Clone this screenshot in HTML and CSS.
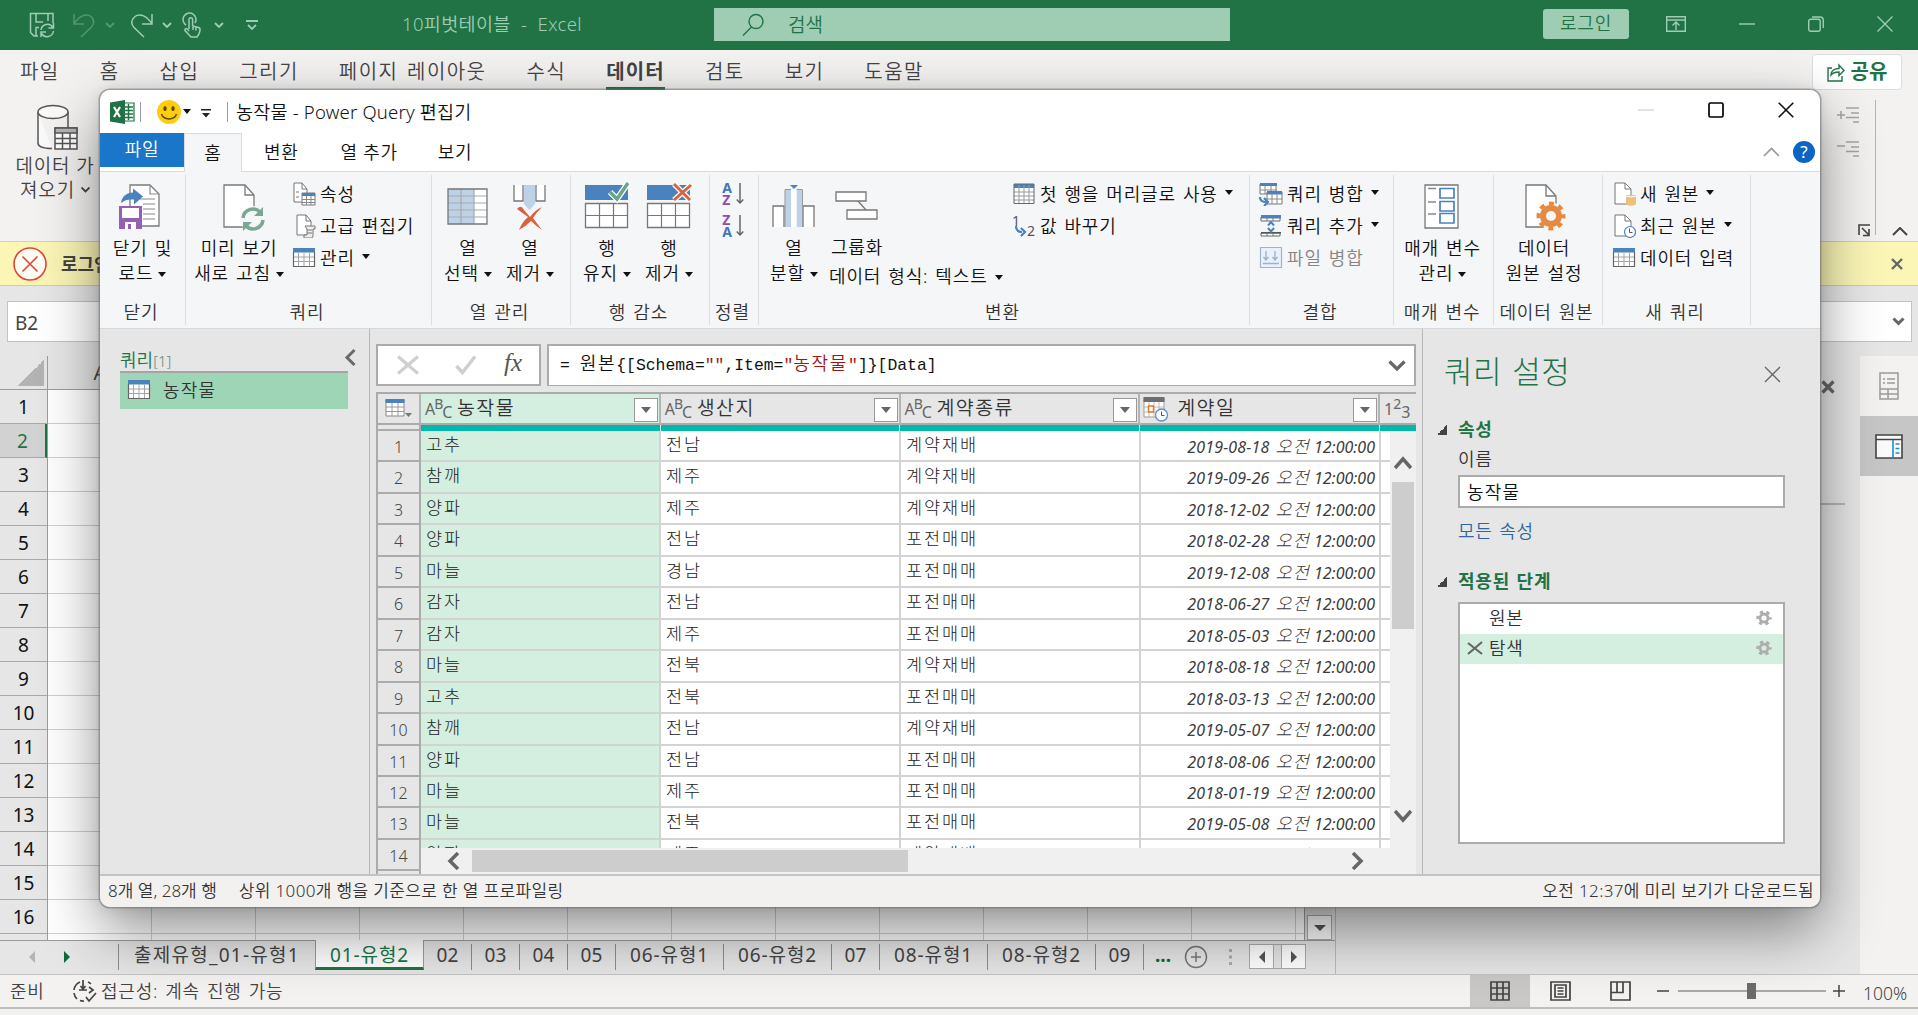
FILE: index.html
```html
<!DOCTYPE html>
<html lang="ko">
<head>
<meta charset="utf-8">
<title>10피벗테이블 - Excel</title>
<link rel="stylesheet" href="styles.css">
</head>
<body>
<div class="excel">
  <header class="xl-title">
    <div class="quick">
      <svg width="26" height="26" viewBox="0 0 26 26" class="line"><path d="M9 24H5L1.500 20.500V1.500H24V11M7 1.500V10H14M19 1.500V9M7 24V15.500H10"/><path d="M12 18a6.500 6.500 0 0 1 12-2.500M24.500 11v5h-5M24.500 19a6.500 6.500 0 0 1-12 2.500M12 25v-5h5"/></svg>
      <svg width="24" height="26" viewBox="0 0 24 26" class="line dim q-undo"><path d="M2 2v10h10M2 12C7 4 14 1 19 4.500c4 3.500 3 8 0 11L9 25"/></svg>
      <svg width="10" height="6" viewBox="0 0 10 6" class="chev dim"><path d="M1 1l4 4 4-4"/></svg>
      <svg width="24" height="26" viewBox="0 0 24 26" class="line q-redo"><path d="M22 2v10H12M22 12C17 4 10 1 5 4.500 1 8 1 12 4 15.500L14 25"/></svg>
      <svg width="10" height="6" viewBox="0 0 10 6" class="chev"><path d="M1 1l4 4 4-4"/></svg>
      <svg width="20" height="26" viewBox="0 0 20 26" class="line q-touch"><path d="M4 13A6.500 6.500 0 1 1 13 11"/><path d="M7 17V7.500a1.800 1.800 0 0 1 3.600 0V14l6 1.500c1.400.5 1.600 1.500 1.400 3L17 22l-2 3H9L3 18.500c-.5-1.500 1-2.500 2.200-1.500L7 19M11 15v3M14 15.500v3"/></svg>
      <svg width="10" height="6" viewBox="0 0 10 6" class="chev q-c3"><path d="M1 1l4 4 4-4"/></svg>
      <svg width="12" height="11" viewBox="0 0 12 11" class="chev q-c4"><path d="M0 1h12M2 5l4 4 4-4"/></svg>
    </div>
    <div class="doc-name">10피벗테이블&nbsp; -&nbsp; Excel</div>
    <div class="search">
      <svg width="22" height="24" viewBox="0 0 22 24"><circle cx="14" cy="8.500" r="7"/><path d="M9.500 14L1 22.500"/></svg>
      <span>검색</span>
    </div>
    <div class="login">로그인</div>
    <div class="xl-controls">
      <svg width="20" height="16" viewBox="0 0 20 16"><path d="M.7.7h18.600v14.600H.7zM.7 4h18.600M10 14V6.500M6.500 9.500L10 6l3.500 3.500"/></svg>
      <svg width="16" height="16" viewBox="0 0 16 16"><path d="M0 8h16"/></svg>
      <svg width="16" height="16" viewBox="0 0 16 16"><rect x=".7" y="3.300" width="11.500" height="12" rx="2"/><path d="M4 1h8q3.300 0 3.300 3.300V12"/></svg>
      <svg width="16" height="16" viewBox="0 0 16 16"><path d="M.5.5l15 15M15.500.5l-15 15"/></svg>
    </div>
  </header>

  <nav class="xl-tabs">
    <span>파일</span><span>홈</span><span>삽입</span><span>그리기</span><span>페이지 레이아웃</span><span>수식</span><span class="on">데이터</span><span>검토</span><span>보기</span><span>도움말</span>
    <div class="share">
      <svg width="18" height="20" viewBox="0 0 18 20"><path d="M5 6H1v13h14v-5"/><path d="M4 13c0-4 3-6.500 8-6.500V3l5 5.500-5 5v-3.500c-3.500 0-6 .5-8 3z"/></svg>
      공유
    </div>
  </nav>

  <div class="xl-ribbon">
    <div class="get-data">
      <svg width="44" height="48" viewBox="0 0 44 48"><path d="M2 8v31c0 4 7 5.500 14 5.500M32 8v16" /><ellipse cx="17" cy="8" rx="15" ry="6.500"/><rect x="19" y="24" width="22" height="21" fill="#fff"/><path d="M19 24h22v5H19z" fill="#b5b5b5"/><path d="M19 34.500h22M19 39.500h22M26.500 29v16M34 29v16"/></svg>
      <span>데이터 가</span>
      <span>져오기 <svg width="9" height="6" viewBox="0 0 9 6"><path d="M.5.5l4 4 4-4" stroke-width="1.800"/></svg></span>
    </div>
    <div class="outline-tools">
      <div class="outline-icons">
        <svg width="22" height="16" viewBox="0 0 22 16"><path d="M0 8h8M4 4v8M9 1h13M14 6h8M9 10.500h13M16 15h6"/></svg>
        <svg width="22" height="16" viewBox="0 0 22 16"><path d="M0 5h8M9 1h13M14 6h8M9 10.500h13M16 15h6"/></svg>
        <svg class="launcher" width="13" height="13" viewBox="0 0 13 13"><path d="M1 11V1h11M4 4l7 7M11 5v6.500H5"/></svg>
      </div>
      <svg class="collapse" width="16" height="9" viewBox="0 0 16 9"><path d="M1 8l7-7 7 7"/></svg>
    </div>
  </div>

  <div class="warning">
    <svg width="36" height="36" viewBox="0 0 36 36"><circle cx="18" cy="18" r="16"/><path d="M10.500 10.500l15 15M25.500 10.500l-15 15"/></svg>
    <b>로그인</b>
    <svg class="warn-x" width="12" height="12" viewBox="0 0 12 12"><path d="M1 1l10 10M11 1L1 11"/></svg>
  </div>

  <div class="name-row">
    <div class="name-box">B2</div>
    <div class="fx-rest"><svg width="13" height="9" viewBox="0 0 13 9"><path d="M1.500 1.500l5 5 5-5"/></svg></div>
  </div>

  <div class="work">
    <main class="sheet">
      <div class="col-heads"><div class="corner"></div><div class="col-a">A</div></div>
      <div class="sheet-body">
        <div class="row-nums" id="rowNums"></div>
        <div class="cells"></div>
        <div class="v-bar"><div class="sb-btn"><i class="tri down"></i></div></div>
      </div>
      <div class="sheet-tabs">
        <div class="nav-arrows"><i class="tri left faint"></i><i class="tri right green"></i></div>
        <span class="st first">출제유형_01-유형1</span><span class="st active">01-유형2</span><span class="st s">02</span><span class="st s">03</span><span class="st s">04</span><span class="st s">05</span><span class="st">06-유형1</span><span class="st">06-유형2</span><span class="st s">07</span><span class="st">08-유형1</span><span class="st">08-유형2</span><span class="st s">09</span>
        <span class="more">...</span>
        <svg class="add" width="24" height="24" viewBox="0 0 24 24"><circle cx="12" cy="12" r="10.500"/><path d="M12 7v10M7 12h10"/></svg>
        <svg class="grip" width="3" height="16" viewBox="0 0 3 16"><path d="M0 0h3v3H0zM0 6.500h3v3H0zM0 13h3v3H0z"/></svg>
        <div class="h-bar"><div class="sb-btn"><i class="tri left"></i></div><div class="sb-gap"></div><div class="sb-btn"><i class="tri right"></i></div></div>
      </div>
    </main>
    <aside class="task-pane">
      <svg width="14" height="14" viewBox="0 0 14 14"><path d="M1.500 1.500l11 11M12.500 1.500l-11 11"/></svg>
      <div class="pane-line"></div>
    </aside>
    <aside class="side-icons">
      <div class="side"><svg width="20" height="28" viewBox="0 0 20 28"><path d="M1 1h18v26H1zM4 7h2M8 7h8M4 11h2M8 11h8M1 17h18M1 22h18M9 17v10" stroke="#9b9b9b" stroke-width="1.500" fill="none"/></svg></div>
      <div class="side sel"><svg width="28" height="25" viewBox="0 0 28 25"><path d="M1 1h26v23H1z" fill="#fafafa" stroke="#444" stroke-width="1.600"/><path d="M1 5.500h26" stroke="#444" stroke-width="1.500"/><path d="M18 6v18M20.500 10h4M20.500 14.500h4M20.500 19h4" stroke="#1e8bcd" stroke-width="1.600"/></svg></div>
    </aside>
  </div>

  <footer class="xl-status">
    <span class="ready">준비</span>
    <svg class="acc" width="26" height="24" viewBox="0 0 26 24"><path d="M8 3a10 10 0 0 0-6 8M2 14a10 10 0 0 0 3 6M8 21.500a10 10 0 0 0 4 .5M19 5a10 10 0 0 0-3-2"/><path d="M11 1v8M8.500 7l2.500 3 2.500-3M7 11h8M17 8l4 3-4 3M14 18l3 4 7-8" /></svg>
    <span class="acc-text">접근성: 계속 진행 가능</span>
    <div class="views">
      <div class="view sel"><svg width="20" height="20" viewBox="0 0 20 20"><path d="M1 1h18v18H1zM7 1v18M13 1v18M1 7h18M1 13h18"/></svg></div>
      <div class="view"><svg width="21" height="20" viewBox="0 0 21 20"><path d="M1 1h19v18H1zM5 4h11v12H5zM7.500 7h6M7.500 10h6M7.500 13h6"/></svg></div>
      <div class="view"><svg width="21" height="20" viewBox="0 0 21 20"><path d="M1 1h19v18H1zM1 11.500h12V1M7 1v10.500"/></svg></div>
    </div>
    <div class="zoom-ctl">
      <svg width="188" height="18" viewBox="0 0 188 18"><path d="M0 9h12M176 9h12M182 3v12" stroke="#444" stroke-width="1.500"/><path d="M21 9h148" stroke="#a8a8a8" stroke-width="2"/><path d="M90 1h9v16h-9z" fill="#6b6b6b"/></svg>
      <span>100%</span>
    </div>
  </footer>
  <div class="desk"></div>
</div>

<section class="pq">
  <header class="pq-title">
    <svg width="25" height="24" viewBox="0 0 25 24"><path d="M13 3h11v18H13z" fill="#fff" stroke="#1f7244" stroke-width="1.200"/><path d="M14 7h9M14 10.500h9M14 14h9M14 17.500h9M18.500 4v16" stroke="#1f7244" stroke-width="1.500"/><path d="M0 2.500L15 0v24L0 21.500z" fill="#1f7244"/><path d="M4 7l6 10M10 7L4 17" stroke="#fff" stroke-width="2.200"/></svg>
    <i class="vsep s1"></i>
    <svg class="smile" width="24" height="24" viewBox="0 0 24 24"><circle cx="12" cy="12" r="12" fill="#ffcd0f"/><ellipse cx="8" cy="8.500" rx="1.700" ry="2.600" fill="#5b4a00"/><ellipse cx="16" cy="8.500" rx="1.700" ry="2.600" fill="#5b4a00"/><path d="M4.500 14c2 6.500 13 6.500 15 0" fill="none" stroke="#5b4a00" stroke-width="1.500"/></svg>
    <i class="dd"></i>
    <svg class="custom" width="10" height="9" viewBox="0 0 10 9"><path d="M0 0h10v1.600H0zM1 4h8L5 8.500z" fill="#222"/></svg>
    <i class="vsep s2"></i>
    <span class="pq-name">농작물 - Power Query 편집기</span>
    <div class="pq-controls">
      <svg width="16" height="16" viewBox="0 0 16 16"><path d="M0 8h16" stroke="#c8c8c8" stroke-width="1.200"/></svg>
      <svg width="16" height="16" viewBox="0 0 16 16"><rect x="1" y="1" width="14" height="14" rx="1.500" stroke="#000" stroke-width="1.700" fill="none"/></svg>
      <svg width="16" height="16" viewBox="0 0 16 16"><path d="M.7.7l14.600 14.600M15.300.7L.7 15.300" stroke="#111" stroke-width="1.600"/></svg>
    </div>
  </header>
  <nav class="pq-tabs">
    <span class="file">파일</span><span class="home">홈</span><span class="t">변환</span><span class="t t3">열 추가</span><span class="t t4">보기</span>
    <div class="pq-help">
      <svg width="17" height="10" viewBox="0 0 17 10"><path d="M1 9l7.500-7.500L16 9" fill="none" stroke="#999" stroke-width="1.700"/></svg>
      <b>?</b>
    </div>
  </nav>

  <div class="ribbon">
    <div class="grp g1">
      <div class="tools">
        <div class="big"><svg width="44" height="48" viewBox="0 0 44 48"><path d="M12 1h20l9 9v32H12z" fill="#fff" stroke="#7a7a7a" stroke-width="1.300"/><path d="M32 1v9h9M20 15h17M25 20h12M25 25h12M25 30h12M25 35h12" fill="none" stroke="#8a8a8a" stroke-width="1.200"/><path d="M3 19c1-7 6-10.500 12-10.500V4.500l10 8-9 8v-5C10 15 7 16 3 19z" fill="#4a82bd"/><path d="M1 22h23v23H1z" fill="#9360b5"/><path d="M4 24h17v10H4zM7 38h11v7H7z" fill="#fff"/><path d="M10 40h3v5h-3z" fill="#9360b5"/></svg>
        <span>닫기 및</span><span>로드 <i class="dd"></i></span></div>
      </div>
      <div class="cap">닫기</div>
    </div>
    <div class="grp g2">
      <div class="tools">
        <div class="big w92"><svg width="44" height="48" viewBox="0 0 44 48"><path d="M2 1h21l9 10v32H2z" fill="#fff" stroke="#7a7a7a" stroke-width="1.300"/><path d="M23 1v10h9" fill="none" stroke="#7a7a7a" stroke-width="1.300"/><circle cx="31" cy="35" r="13" fill="#f5f6f8"/><path d="M21 34a10 10 0 0 1 17-6M41 36a10 10 0 0 1-17 6" fill="none" stroke="#79a992" stroke-width="3.500"/><path d="M41 23v9h-9zM21 47v-9h9z" fill="#79a992"/></svg>
        <span>미리 보기</span><span>새로 고침 <i class="dd"></i></span></div>
        <div class="stack">
          <div class="small"><svg width="24" height="24" viewBox="0 0 24 24"><path d="M2 1h8l5 6v13H2z" fill="#fff" stroke="#777"/><path d="M10 1v6h5M4 10h3M4 15h3" fill="none" stroke="#777"/><path d="M10 11h13v12H10z" fill="#fff" stroke="#777"/><path d="M10 11h13v3H10z" fill="#4a82bd"/><path d="M10 17.500h13M10 20.500h13M14.500 14v9M19 14v9" stroke="#888"/></svg>속성</div>
          <div class="small"><svg width="24" height="24" viewBox="0 0 24 24"><path d="M5 1h9l5 6v14H5z" fill="#fff" stroke="#777"/><path d="M14 1v6h5" fill="none" stroke="#777"/><path d="M13 12h10v3h-2v7q0 2-2 2h-7v-3h3v-6z" fill="#eee" stroke="#777"/><path d="M15 16h5M15 19h5" stroke="#777"/></svg>고급 편집기</div>
          <div class="small"><svg width="24" height="22" viewBox="0 0 24 22"><use href="#tbl"/></svg>관리 <i class="dd"></i></div>
        </div>
      </div>
      <div class="cap">쿼리</div>
    </div>
    <div class="grp g3">
      <div class="tools">
        <div class="big w62"><svg width="44" height="48" viewBox="0 0 44 48"><path d="M2 5h39v35H2z" fill="#fff"/><path d="M2 5h26v35H2z" fill="#bdd2e8"/><path d="M2 12h39M2 19h39M2 26h39M2 33h39M15 5v35M28 5v35" stroke="#a9a9a9" stroke-width="1.200"/><path d="M2 5h39v35H2z" fill="none" stroke="#777" stroke-width="1.300"/></svg>
        <span>열</span><span>선택 <i class="dd"></i></span></div>
        <div class="big w62"><svg width="44" height="48" viewBox="0 0 44 48"><path d="M6 1v16h9V1M37 1v16h-9V1" fill="#fff" stroke="#777" stroke-width="1.300"/><path d="M16 1h11v19l-5.500 6L16 20z" fill="#bdd2e8"/><path d="M9 25q4-5 7 1l6 7q5-7 12-10-6 6-9 11l9 12q-6-4-11-9-6 6-12 9 3-8 9-13z" fill="#d9623c"/></svg>
        <span>열</span><span>제거 <i class="dd"></i></span></div>
      </div>
      <div class="cap">열 관리</div>
    </div>
    <div class="grp g3">
      <div class="tools">
        <div class="big w62"><svg width="46" height="48" viewBox="0 0 46 48"><path d="M1 1h43v15H1z" fill="#4a82bd"/><path d="M1.500 19.500h42v24h-42z" fill="#fff" stroke="#777" stroke-width="1.300"/><path d="M1 31.500h43M15.500 19v24M29.500 19v24" stroke="#777" stroke-width="1.200"/><path d="M26 8l7 7L44-1" fill="none" stroke="#fff" stroke-width="6"/><path d="M26 8l7 7L44-1" fill="none" stroke="#6ba58b" stroke-width="3.500"/></svg>
        <span>행</span><span>유지 <i class="dd"></i></span></div>
        <div class="big w62"><svg width="46" height="48" viewBox="0 0 46 48"><path d="M1 1h43v15H1z" fill="#4a82bd"/><path d="M1.500 19.500h42v24h-42z" fill="#fff" stroke="#777" stroke-width="1.300"/><path d="M1 31.500h43M15.500 19v24M29.500 19v24" stroke="#777" stroke-width="1.200"/><path d="M28 0l16 16M45 1L28 16" stroke="#fff" stroke-width="5.500"/><path d="M28 0l16 16M45 1L28 16" stroke="#d9623c" stroke-width="3"/></svg>
        <span>행</span><span>제거 <i class="dd"></i></span></div>
      </div>
      <div class="cap">행 감소</div>
    </div>
    <div class="grp g5">
      <div class="tools sorts">
        <div class="sort"><p><b class="a">A</b><b class="z">Z</b></p><svg width="8" height="22" viewBox="0 0 8 22"><path d="M4 0v20M.7 16.500L4 20l3.300-3.500"/></svg></div>
        <div class="sort"><p><b class="z">Z</b><b class="a">A</b></p><svg width="8" height="22" viewBox="0 0 8 22"><path d="M4 0v20M.7 16.500L4 20l3.300-3.500"/></svg></div>
      </div>
      <div class="cap">정렬</div>
    </div>
    <div class="grp g6">
      <div class="tools">
        <div class="big w62"><svg width="44" height="48" viewBox="0 0 44 48"><path d="M1 43V22h11v21M31 43V22h11v21" fill="#fff" stroke="#777" stroke-width="1.300"/><path d="M13 5.500h6v37.500h-6zM24.500 5.500h6v37.500h-6z" fill="#bdd2e8"/><path d="M13 43V5.500h6M30.500 43V5.500h-6" fill="none" stroke="#999"/><path d="M19 5.500h5.500V43H19z" fill="#fff"/><path d="M18 1h8l-4 4z" fill="#4a82bd"/></svg>
        <span>열</span><span>분할 <i class="dd"></i></span></div>
        <div class="mid">
          <div class="grouping"><svg width="44" height="30" viewBox="0 0 44 30"><path d="M23 10l8 9" stroke="#777" stroke-width="1.300"/><path d="M1 1h30v9H1zM12 19h30v9H12z" fill="#fff" stroke="#777" stroke-width="1.300"/></svg><span>그룹화</span></div>
          <div class="dtype">데이터 형식: 텍스트 <i class="dd"></i></div>
        </div>
        <div class="stack">
          <div class="small"><svg width="24" height="24" viewBox="0 0 24 24"><path d="M2 2h20v19H2z" fill="#fff"/><path d="M2 2h20v4H2z" fill="#4a82bd"/><path d="M2 10h20M2 14h20M2 18h20M7 3v18M12 3v18M17 3v18" stroke="#999"/><path d="M2 2h20v19.500H2z" fill="none" stroke="#666"/></svg>첫 행을 머리글로 사용 <i class="dd"></i></div>
          <div class="small"><span class="onetwo"><i>1</i><svg width="12" height="11" viewBox="0 0 12 11"><path d="M1 0q0 6 6 6M6 2l4 4-4 4" fill="none" stroke="#4a82bd" stroke-width="2.200"/></svg><i>2</i></span>값 바꾸기</div>
        </div>
      </div>
      <div class="cap">변환</div>
    </div>
    <div class="grp g7">
      <div class="tools">
        <div class="stack">
          <div class="small"><svg width="24" height="24" viewBox="0 0 24 24"><path d="M1 2h16v10H1z" fill="#fff" stroke="#777"/><path d="M1 1h17v3H1z" fill="#4a82bd"/><path d="M1 8h17M6 4v8M12 4v8" stroke="#888"/><path d="M8 10h15v12H8z" fill="#fff" stroke="#777"/><path d="M8 9h15v3.500H8z" fill="#4a82bd"/><path d="M8 17h15M13 12v10M18 12v10" stroke="#888"/><path d="M1 15q0 5 6 5M5 16l4 4-4 4" fill="none" stroke="#4a82bd" stroke-width="2.200"/></svg>쿼리 병합 <i class="dd"></i></div>
          <div class="small"><svg width="24" height="24" viewBox="0 0 24 24"><path d="M2 3h19v4H2zM2 19h19v3H2z" fill="#fff" stroke="#666"/><path d="M2 1h20v3.500H2z" fill="#4a82bd"/><path d="M2 18h20v1.500H2z" fill="#555"/><path d="M8 4v3M14 4v3M8 19v3M14 19v3" stroke="#777"/><path d="M9 11.500L12 8l3 3.500M9 14l3 3.500 3-3.500" fill="none" stroke="#4a82bd" stroke-width="2"/></svg>쿼리 추가 <i class="dd"></i></div>
          <div class="small off"><svg width="24" height="24" viewBox="0 0 24 24"><path d="M1.500 1.500h21v20h-21z" fill="#eaf1fa" stroke="#9db3d0" stroke-width="1.200"/><path d="M7 5v8M4.500 11L7 14l2.500-3M16 5v8M13.500 11l2.500 3 2.500-3M4 17.500h16" fill="none" stroke="#9db3d0" stroke-width="1.400"/></svg>파일 병합</div>
        </div>
      </div>
      <div class="cap">결합</div>
    </div>
    <div class="grp g8">
      <div class="tools">
        <div class="big"><svg width="44" height="48" viewBox="0 0 44 48"><path d="M5 1h33v43H5z" fill="#fff" stroke="#777" stroke-width="1.300"/><path d="M8 4.500h8M8 18h8M8 30h8" stroke="#888" stroke-width="1.400"/><path d="M20 4.500h14v9.500H20zM20 17.500h14v9.500H20zM20 29.500h14v9.500H20z" fill="#fff" stroke="#4a82bd" stroke-width="1.700"/></svg>
        <span>매개 변수</span><span>관리 <i class="dd"></i></span></div>
      </div>
      <div class="cap">매개 변수</div>
    </div>
    <div class="grp g9">
      <div class="tools">
        <div class="big"><svg width="44" height="48" viewBox="0 0 44 48"><path d="M4 1h20l10 11v31H4z" fill="#fff" stroke="#777" stroke-width="1.300"/><path d="M24 1v11h10" fill="none" stroke="#777" stroke-width="1.300"/><circle cx="29" cy="32" r="13.500" fill="#f5f6f8"/><circle cx="29" cy="32" r="8" fill="none" stroke="#e68a41" stroke-width="6"/><circle cx="29" cy="32" r="12.500" fill="none" stroke="#e68a41" stroke-width="4" stroke-dasharray="4.910 4.910" stroke-dashoffset="2.400"/></svg>
        <span>데이터</span><span>원본 설정</span></div>
      </div>
      <div class="cap">데이터 원본</div>
    </div>
    <div class="grp g10">
      <div class="tools">
        <div class="stack">
          <div class="small"><svg width="24" height="24" viewBox="0 0 24 24"><path d="M3 1h10l6 6v15H3z" fill="#fff" stroke="#777"/><path d="M13 1v6h6" fill="none" stroke="#777"/><path d="M14 13h10v9.500q-5 2.500-10 0z" fill="#eac27e"/><path d="M14 14q5 2 10 0" fill="none" stroke="#fff"/></svg>새 원본 <i class="dd"></i></div>
          <div class="small"><svg width="24" height="24" viewBox="0 0 24 24"><path d="M3 1h10l6 6v15H3z" fill="#fff" stroke="#777"/><path d="M13 1v6h6" fill="none" stroke="#777"/><circle cx="18" cy="18" r="5.500" fill="#fff" stroke="#4a82bd" stroke-width="1.200"/><path d="M17.500 14.500v4h3" fill="none" stroke="#555"/></svg>최근 원본 <i class="dd"></i></div>
          <div class="small"><svg width="24" height="22" viewBox="0 0 24 22"><use href="#tbl"/></svg>데이터 입력</div>
        </div>
      </div>
      <div class="cap">새 쿼리</div>
    </div>
  </div>

  <div class="pq-body">
    <aside class="queries">
      <div class="q-head"><span>쿼리<small>[1]</small></span><svg width="12" height="17" viewBox="0 0 12 17"><path d="M10.500 1L3 8.500l7.500 7.500" fill="none" stroke="#6a6a6a" stroke-width="3"/></svg></div>
      <div class="q-item"><svg width="24" height="22" viewBox="0 0 24 22"><use href="#tbl"/></svg>농작물</div>
    </aside>

    <main class="center">
      <div class="formula">
        <div class="f-btns">
          <svg width="22" height="20" viewBox="0 0 22 20"><path d="M1 1.500l20 17M21 1.500l-20 17" stroke="#cfcfcf" stroke-width="3.200"/></svg>
          <svg width="22" height="20" viewBox="0 0 22 20"><path d="M1.500 11l6 6.500L20 1.500" fill="none" stroke="#cfcfcf" stroke-width="3.500"/></svg>
          <em>fx</em>
        </div>
        <div class="f-text"><code>= <u>원본</u>{[Schema=<s>""</s>,Item=<s>"<u>농작물</u>"</s>]}[Data]</code><svg width="18" height="12" viewBox="0 0 18 12"><path d="M1.500 1.500L9 9l7.500-7.500" fill="none" stroke="#666" stroke-width="3.200"/></svg></div>
      </div>
      <div class="grid">
        <div class="g-head">
          <div class="gh num"><svg width="28" height="22" viewBox="0 0 28 22"><path d="M1 2h18v16H1z" fill="#fff" stroke="#888"/><path d="M.5 1h19v4H.5z" fill="#4a82bd"/><path d="M1 9h18M1 13.500h18M7 5v13M13 5v13" stroke="#999"/><path d="M20 15h7l-3.500 4z" fill="#777"/></svg></div>
          <div class="gh sel"><span class="abc"><i>A</i><i>B</i><i>C</i></span>농작물<b class="dd-btn"></b></div>
          <div class="gh"><span class="abc"><i>A</i><i>B</i><i>C</i></span>생산지<b class="dd-btn"></b></div>
          <div class="gh"><span class="abc"><i>A</i><i>B</i><i>C</i></span>계약종류<b class="dd-btn"></b></div>
          <div class="gh date"><svg width="26" height="26" viewBox="0 0 26 26"><path d="M1 2h20v19H1z" fill="#fff" stroke="#999"/><path d="M.5 1h21v5H.5z" fill="#6e6e6e"/><path d="M1 11h20M1 16h20M6 6v15M11 6v15M16 6v15" stroke="#bbb"/><path d="M5.500 10h5v6h-5z" fill="#fff" stroke="#e07b28" stroke-width="1.500"/><circle cx="18.500" cy="19" r="6" fill="#fff" stroke="#5b8fc7" stroke-width="1.300"/><path d="M18.500 15.500v4h3" fill="none" stroke="#555"/></svg>계약일<b class="dd-btn"></b></div>
          <div class="gh last"><span class="abc n"><i>1</i><i>2</i><i>3</i></span></div>
        </div>
        <div class="g-strip"><i class="num"></i><i></i><i></i><i></i><i></i><i class="last"></i></div>
        <div class="g-main">
          <div class="g-nums" id="gridNums"></div>
          <div class="g-right">
            <div class="g-view">
              <div class="g-rows" id="gridRows"></div>
              <div class="g-vbar"><svg width="18" height="15" viewBox="0 0 18 15"><path d="M1 13l8-9 8 9" /></svg><div class="thumb"></div><svg class="dn" width="18" height="15" viewBox="0 0 18 15"><path d="M1 2l8 9 8-9"/></svg></div>
            </div>
            <div class="g-hbar"><svg width="14" height="18" viewBox="0 0 14 18"><path d="M12 1L4 9l8 8"/></svg><div class="thumb"></div><svg class="rt" width="14" height="18" viewBox="0 0 14 18"><path d="M2 1l8 8-8 8"/></svg></div>
          </div>
        </div>
      </div>
    </main>

    <aside class="settings">
      <div class="s-head"><h2>쿼리 설정</h2><svg width="17" height="17" viewBox="0 0 17 17"><path d="M1 1l15 15M16 1L1 16" stroke="#666" stroke-width="1.400"/></svg></div>
      <h3><i class="fold"></i>속성</h3>
      <label>이름</label>
      <div class="input">농작물</div>
      <a>모든 속성</a>
      <h3 class="h-steps"><i class="fold"></i>적용된 단계</h3>
      <div class="steps">
        <div class="step"><span>원본</span><svg width="16" height="16" viewBox="0 0 16 16"><use href="#gear"/></svg></div>
        <div class="step on"><svg class="del" width="16" height="14" viewBox="0 0 16 14"><path d="M1 2l14 11M15 1L1 13" stroke="#666" stroke-width="2.200"/></svg><span>탐색</span><svg width="16" height="16" viewBox="0 0 16 16"><use href="#gear"/></svg></div>
      </div>
    </aside>
  </div>
  <footer class="pq-status"><span>8개 열, 28개 행</span><span class="p2">상위 1000개 행을 기준으로 한 열 프로파일링</span><span class="p3">오전 12:37에 미리 보기가 다운로드됨</span></footer>
</section>

<svg class="defs" width="0" height="0">
  <symbol id="tbl" viewBox="0 0 24 22"><path d="M1.500 2h21v17.500h-21z" fill="#fff"/><path d="M1 1h22v4.500H1z" fill="#4a82bd"/><path d="M1 10h22M1 14.500h22M6.500 5.500v14M12 5.500v14M17.500 5.500v14" stroke="#a5a5a5"/><path d="M1.500 5v14.500h21V5" fill="none" stroke="#666" stroke-width="1.200"/></symbol>
  <symbol id="gear" viewBox="0 0 16 16"><circle cx="8" cy="8" r="4" fill="none" stroke="#adadad" stroke-width="2.800"/><circle cx="8" cy="8" r="6.300" fill="none" stroke="#adadad" stroke-width="2.800" stroke-dasharray="3.200 3.397" stroke-dashoffset="1.600"/></symbol>
</svg>
<script src="script.js"></script>
</body>
</html>
```
FILE: styles.css
```css
* { box-sizing: border-box; }
body { margin: 0; width: 1918px; height: 1015px; overflow: hidden; position: relative; font-family: "Noto Sans", "Noto Sans CJK KR", sans-serif; font-size: 18px; line-height: 24px; color: #444; background: #e6e6e6; }
svg { display: block; flex: none; }
i, em { font-style: normal; }
.defs { position: absolute; }

.excel { display: flex; flex-direction: column; width: 1918px; height: 1015px; }

/* Excel title bar */
.xl-title { height: 50px; flex: none; background: #217346; color: #9fcdb3; display: flex; align-items: center; }
.quick { display: flex; align-items: center; width: 402px; padding-left: 29px; }
.line, .chev { fill: none; stroke: #9fcdb3; stroke-width: 1.500; }
.chev { stroke-width: 1.800; }
.dim { opacity: .4; }
.q-undo { margin: 0 9px 0 17px; }
.q-redo { margin: 0 8px 0 15px; }
.q-touch { margin-left: 10px; }
.q-c3 { margin-left: 12px; }
.q-c4 { margin-left: 22px; }
.doc-name { width: 312px; font-size: 18.500px; letter-spacing: .35px; white-space: nowrap; margin-top: -2px; font-weight: 350; }
.search { width: 516px; height: 33px; background: #9fcdb4; color: #217346; display: flex; align-items: center; padding-left: 28px; gap: 24px; font-size: 19px; margin-top: -1px; font-weight: 350; }
.search svg { fill: none; stroke: #217346; stroke-width: 1.400; }
.login { margin-left: 313px; width: 86px; height: 30px; line-height: 29px; background: #9fcdb4; color: #217346; border-radius: 3px; text-align: center; font-size: 18px; letter-spacing: .8px; margin-top: -2px; font-weight: 350; }
.xl-controls { display: flex; align-items: center; margin-left: 37px; gap: 53px; margin-top: -2px; }
.xl-controls svg { fill: none; stroke: #9fcdb3; stroke-width: 1.400; }

/* Excel ribbon */
.xl-tabs { height: 40px; flex: none; background: #f3f2f1; display: flex; align-items: center; gap: 40px; padding-left: 20px; font-size: 20px; font-weight: 350; }
.xl-tabs span { line-height: 44px; height: 40px; letter-spacing: 1.450px; word-spacing: 2px; white-space: nowrap; }
.xl-tabs .on { font-weight: 700; border-bottom: 3px solid #217346; letter-spacing: 1.200px; }
.share { margin: 4px 16px 0 auto; width: 90px; height: 36px; background: #fff; border: 1px solid #dedddc; border-radius: 4px; color: #217346; font-weight: 700; display: flex; align-items: center; justify-content: center; gap: 6px; font-size: 20px; }
.share svg { fill: none; stroke: #217346; stroke-width: 1.400; }
.xl-ribbon { height: 151px; flex: none; background: #f3f2f1; display: flex; justify-content: space-between; }
.get-data { width: 110px; padding-top: 14px; display: flex; flex-direction: column; align-items: center; font-size: 19px; letter-spacing: .8px; white-space: nowrap; font-weight: 350; }
.get-data > svg { fill: #fafafa; stroke: #555; stroke-width: 1.500; margin: 0 0 2px 5px; }
.get-data > span { display: flex; align-items: center; gap: 6px; }
.get-data span svg { fill: none; stroke: #444; }
.outline-tools { display: flex; height: 100%; }
.outline-icons { width: 39px; height: 135px; margin-top: 10px; border-right: 1px solid #b5b5b5; display: flex; flex-direction: column; padding-top: 7px; gap: 18px; }
.outline-icons svg { stroke: #a5a5a5; stroke-width: 1.600; fill: none; }
.outline-icons .launcher { stroke: #444; margin: 49px 0 0 21px; }
.collapse { fill: none; stroke: #444; stroke-width: 2; margin: 137px 10px 0 16px; }
.warning { height: 45px; flex: none; background: #fbf6b6; border-top: 1px solid #d6d3a4; border-bottom: 1px solid #d4cf8e; display: flex; align-items: center; padding: 0 15px 0 12px; gap: 13px; }
.warning svg { fill: #fffef4; stroke: #e8413a; stroke-width: 1.600; }
.warning b { font-size: 18px; }
.warning .warn-x { margin-left: auto; stroke: #666; stroke-width: 2.400; }
.name-row { height: 70px; flex: none; padding: 15px 6px 0 7px; display: flex; gap: 100px; }
.name-box, .fx-rest { height: 41px; background: #fff; border: 1px solid #c3c3c3; }
.name-box { width: 180px; padding: 0 7px; line-height: 42px; font-size: 19px; }
.fx-rest { flex: 1; display: flex; align-items: center; justify-content: flex-end; padding-right: 6px; }
.fx-rest svg { fill: none; stroke: #666; stroke-width: 3; }

/* worksheet */
.work { flex: 1; min-height: 0; display: flex; }
.sheet { width: 1336px; border-right: 1px solid #bbb; display: flex; flex-direction: column; }
.col-heads { height: 34px; flex: none; display: flex; border-bottom: 1px solid #9c9c9c; font-size: 20px; }
.corner { width: 48px; border-right: 1px solid #9c9c9c; background: linear-gradient(to bottom right, transparent 50%, #b3b3b3 50%) 18px 4px / 26px 26px no-repeat; }
.col-a { width: 104px; text-align: center; line-height: 34px; }
.sheet-body { flex: 1; min-height: 0; display: flex; overflow: hidden; border-bottom: 1px solid #9c9c9c; }
.row-nums { width: 48px; border-right: 1px solid #9c9c9c; color: #111; font-size: 19px; }
.row-nums div { height: 34px; line-height: 35px; text-align: center; border-bottom: 1px solid #a8a8a8; }
.row-nums .cur { background: #d2d2d2; color: #217346; border-right: 2px solid #217346; }
.cells { width: 1257px; border-right: 1px solid #9c9c9c; background: repeating-linear-gradient(to right, transparent 0 103px, #cfcfcf 103px 104px), repeating-linear-gradient(to bottom, #fff 0 33px, #cfcfcf 33px 34px); }
.v-bar { width: 27px; padding: 0 0 0 2px; display: flex; align-items: flex-end; background: #e0e0e0; }
.sb-btn { width: 25px; height: 25px; background: #fff; border: 1px solid #ababab; display: flex; align-items: center; justify-content: center; }
.tri { width: 0; height: 0; border: 6px solid transparent; }
.tri.down { border-top-color: #555; border-bottom: 0; }
.tri.left { border-right-color: #555; border-left: 0; }
.tri.right { border-left-color: #555; border-right: 0; }
.tri.green { border-left-color: #0d6b36; }
.tri.faint { border-right-color: #b4b4b4; }
.sheet-tabs { height: 33px; flex: none; display: flex; font-size: 19px; align-items: flex-start; }
.nav-arrows { width: 118px; height: 31px; display: flex; gap: 29px; padding: 10px 0 0 29px; flex: none; }
.st { width: 108px; height: 26px; margin-top: 3px; line-height: 22px; border-right: 1px solid #8e8e8e; text-align: center; white-space: nowrap; flex: none; letter-spacing: .9px; }
.st.s { width: 48px; letter-spacing: .2px; }
.st.first { width: 197px; border-left: 1px solid #8e8e8e; border-right: 0; letter-spacing: 1.250px; }
.st.active { height: 30px; margin-top: -1px; line-height: 30px; background: #fff; border: 1px solid #9c9c9c; border-width: 0 1px 3px; border-bottom-color: #217346; color: #217346; width: 109px; }
.more { color: #0d6b36; font-weight: 700; margin-left: 11px; width: 29px; line-height: 28px; }
.add { fill: none; stroke: #777; stroke-width: 1.500; margin-top: 4px; }
.grip { fill: #aaa; margin: 8px 17px 0 21px; }
.h-bar { display: flex; margin-top: 3px; }
.sb-gap { width: 7px; border: 1px solid #ababab; border-width: 1px 0; }
.task-pane { width: 524px; display: flex; flex-direction: column; align-items: flex-end; padding-top: 24px; }
.task-pane svg { stroke: #666; stroke-width: 3.200; margin-right: 25px; }
.pane-line { width: 400px; height: 2px; background: #b5b5b5; margin: 109px 15px 0 0; }
.side-icons { width: 58px; background: #f3f2f1; }
.side { height: 60px; display: flex; align-items: center; justify-content: center; }
.side.sel { background: #c6c6c6; }

/* Excel status bar */
.xl-status { height: 33px; flex: none; background: #f3f2f1; border-top: 1px solid #c4c4c4; display: flex; align-items: center; font-size: 18px; white-space: nowrap; font-weight: 350; }
.ready { width: 62px; padding-left: 10px; letter-spacing: .8px; }
.acc { margin-left: 10px; fill: none; stroke: #444; stroke-width: 1.700; }
.acc-text { margin-left: 3px; letter-spacing: .8px; word-spacing: 1.500px; }
.views { margin-left: auto; display: flex; height: 32px; }
.view { width: 60.500px; display: flex; align-items: center; justify-content: center; }
.view.sel { background: #c9c8c7; }
.view svg { fill: none; stroke: #444; stroke-width: 1.700; }
.zoom-ctl { width: 267px; display: flex; align-items: center; padding-left: 6px; gap: 18px; font-size: 17.500px; }
.zoom-ctl span { padding-top: 3px; }
.desk { height: 8px; flex: none; border-top: 2px solid #bdbdbd; background: #f1f1f0; }

/* Power Query window */
.pq { position: absolute; left: 100px; top: 90px; width: 1720px; height: 817px; background: #e6e6e6; border-radius: 10px; overflow: hidden; display: flex; flex-direction: column; box-shadow: 0 0 0 1.500px rgba(110,110,110,.55), 0 0 14px rgba(0,0,0,.1), 0 24px 60px rgba(0,0,0,.44); color: #111; font-weight: 350; }
.pq-title { height: 43px; flex: none; background: #fff; display: flex; align-items: center; padding-left: 10px; }
.vsep { width: 1px; height: 20px; background: #999; }
.s1 { margin: 0 16px 0 5px; }
.s2 { margin: 0 8px 0 16px; }
.dd { display: inline-block; width: 0; height: 0; border: 4px solid transparent; border-top: 5px solid #111; border-bottom: 0; vertical-align: 3px; }
.smile { margin-right: 2px; }
.custom { margin: 3px 0 0 10px; }
.pq-name { font-size: 18.500px; letter-spacing: .2px; white-space: nowrap; }
.pq-controls { margin: -4px 26px 0 auto; display: flex; gap: 54px; }
.pq-tabs { height: 39px; flex: none; background: #fff; border-bottom: 1px solid #dadbdc; display: flex; line-height: 38px; letter-spacing: .7px; }
.file { width: 84px; height: 34px; background: #1976c8; color: #fff; text-align: center; line-height: 33px; }
.home { width: 58px; height: 39px; background: #f5f6f8; border: 1px solid #dadbdc; border-bottom: 0; text-align: center; }
.t { padding-left: 22px; }
.t3 { padding-left: 42px; }
.t4 { padding-left: 40px; }
.pq-help { margin-left: auto; display: flex; align-items: center; gap: 13px; padding-right: 5px; }
.pq-help b { width: 22px; height: 22px; border-radius: 50%; background: #0a66c2; color: #fff; text-align: center; line-height: 22px; font-size: 17px; font-weight: 400; letter-spacing: 0; }
.ribbon { height: 157px; flex: none; background: #f5f6f8; border-bottom: 1px solid #d6d8da; display: flex; padding-top: 3px; letter-spacing: .85px; word-spacing: 1.500px; white-space: nowrap; }
.grp { height: 150px; border-right: 1px solid #dcdee1; display: flex; flex-direction: column; }
.g1 { width: 86px; } .g2 { width: 246px; } .g3 { width: 139px; } .g5 { width: 49px; } .g6 { width: 491px; }
.g7 { width: 144px; } .g8 { width: 100px; } .g9 { width: 109px; } .g10 { width: 148px; }
.tools { height: 125px; display: flex; padding-top: 9px; }
.g1 .tools, .g8 .tools, .g9 .tools { justify-content: center; }
.g1 .big svg { margin-left: -5px; }
.g2 .big svg { margin-left: 9px; }
.g8 .tools { padding-right: 2px; }
.g9 .tools { padding-right: 8px; }
.g2 .tools { padding-left: 7px; }
.g3 .tools { padding-left: 5px; }
.g6 .tools { padding-left: 4px; }
.g7 .tools, .g10 .tools { padding-left: 9px; }
.cap { text-align: center; line-height: 24px; color: #333; padding-right: 3px; }
.big { display: flex; flex-direction: column; align-items: center; }
.big svg { margin-bottom: 4px; overflow: visible; }
.big span { line-height: 25px; }
.big .dd { margin-left: -2px; }
.w92 { width: 92px; } .w62 { width: 62px; }
.stack { display: flex; flex-direction: column; gap: 8px; margin: -2px 0 0 7px; }
.g6 .stack { margin-left: 1px; }
.g7 .stack, .g10 .stack { margin-left: 0; }
.small { height: 24px; display: flex; align-items: center; gap: 4px; }
.small .dd { margin: -3px 0 0 3px; }
.off { color: #858585; }
.sorts { flex-direction: column; align-items: center; gap: 8px; padding-top: 7px; padding-right: 2px; }
.sort { height: 24px; display: flex; gap: 4px; align-items: center; }
.sort p { margin: 0; display: flex; flex-direction: column; font-size: 14px; line-height: 12px; letter-spacing: 0; }
.sort .a { color: #3f78b5; } .sort .z { color: #8d4fae; }
.sort svg { fill: none; stroke: #666; stroke-width: 1.500; }
.mid { width: 186px; padding-left: 4px; }
.grouping { width: 56px; display: flex; flex-direction: column; align-items: center; padding-top: 7px; }
.grouping svg { margin-bottom: 14px; }
.dtype { margin-top: 5px; }
.onetwo { width: 24px; height: 24px; display: flex; font-size: 14px; letter-spacing: 0; color: #555; line-height: 14px; font-weight: 400; }
.onetwo svg { margin: 12px 0 0 -5px; }
.onetwo i:last-child { margin-top: 10px; }

.pq-body { height: 545px; flex: none; display: flex; }
.queries { width: 270px; border-right: 1px solid #b8b8b8; padding: 20px 13px 0 20px; }
.q-head { height: 22px; width: 236px; display: flex; justify-content: space-between; color: #217346; }
.q-head span { white-space: nowrap; line-height: 23px; }
.q-head small { font-size: 15px; color: #5b8a83; }
.q-item { width: 228px; height: 38px; border-top: 2px solid #a5a5a5; background: #9fd5b7; display: flex; align-items: center; gap: 12px; padding: 0 0 2px 7px; color: #333; letter-spacing: 1.200px; }

.center { width: 1052px; padding: 15px 6px 0; display: flex; flex-direction: column; }
.formula { display: flex; gap: 6px; height: 42px; margin-bottom: 6px; }
.f-btns { width: 165px; border: 2px solid #ababab; background: #fff; display: flex; align-items: center; padding-left: 19px; gap: 36px; }
.f-btns em { font: italic 25px/30px "Liberation Serif", serif; color: #555; margin-left: -9px; margin-top: -5px; }
.f-text { flex: 1; border: 2px solid #ababab; border-bottom-width: 1px; background: #fff; display: flex; align-items: center; justify-content: space-between; padding: 0 8px 0 11px; }
code { font: 16.400px/24px "Liberation Mono", "Noto Sans CJK KR", monospace; color: #111; white-space: pre; }
code u { text-decoration: none; font-size: 18px; letter-spacing: 1.700px; font-weight: 350; }
code s { text-decoration: none; color: #a31515; }

.grid { flex: 1; min-height: 0; border-left: 2px solid #ababab; border-top: 2px solid #ababab; display: flex; flex-direction: column; }
.g-head { display: flex; height: 31px; flex: none; }
.gh { width: 240px; border-right: 2px solid #b4b4b4; border-bottom: 2px solid #ababab; display: flex; align-items: center; padding: 0 1px 2px 4px; font-size: 19.500px; letter-spacing: 1.400px; line-height: 24px; color: #333; white-space: nowrap; }
.gh.num { width: 43px; padding-left: 7px; padding-bottom: 0; }
.gh.sel { background: #d4efe0; }
.gh.last { width: 36px; border-right: 0; }
.gh.date svg { margin: 3px 8px 0 0; }
.gh.date { padding-left: 3px; }
.abc { display: flex; width: 32px; font-size: 16px; font-weight: 400; letter-spacing: -1px; line-height: 20px; color: #666; }
.abc i:nth-child(1) { margin-top: 3px; }
.abc i:nth-child(2) { margin: -2px 0 2px 0; font-size: 14px; }
.abc i:nth-child(3) { margin: 6px 0 -6px 0; }
.abc.n { font-size: 16px; width: 26px; letter-spacing: 0; }
.dd-btn { width: 24px; height: 24px; margin: 4px 0 0 auto; border: 1px solid #999; background: #fff; display: flex; align-items: center; justify-content: center; }
.dd-btn::after { content: ""; border: 5px solid transparent; border-top: 6px solid #666; border-bottom: 0; }
.g-strip { display: flex; height: 6px; flex: none; }
.g-strip i { width: 240px; background: #01b8aa; border-right: 1px solid #cfe; }
.g-strip .num { width: 43px; background: #e6e6e6; border-right: 2px solid #ababab; border-bottom: 2px solid #ababab; }
.g-strip .last { width: 36px; border: 0; }
.g-main { flex: 1; min-height: 0; display: flex; }
.g-nums { width: 43px; border-right: 2px solid #ababab; overflow: hidden; font-size: 16px; color: #444; }
.g-nums div { height: 31.460px; line-height: 33px; border-bottom: 2px solid #ababab; text-align: center; }
.g-right { flex: 1; display: flex; flex-direction: column; min-width: 0; }
.g-view { height: 417px; display: flex; overflow: hidden; }
.g-rows { width: 969px; overflow: hidden; background: #fff; }
.g-row { display: flex; height: 31.460px; }
.g-row span { width: 240px; flex: none; border-right: 2px solid #d3d3d3; border-bottom: 2px solid #d3d3d3; padding-left: 5px; line-height: 27px; font-size: 17.500px; letter-spacing: 1.900px; white-space: nowrap; font-weight: 300; color: #222; }
.g-row span:first-child { background: #d4efe0; }
.g-row .d { font-style: italic; font-size: 16px; letter-spacing: 0; text-align: right; padding: 0 4px 0 0; line-height: 31px; font-weight: 400; color: #3c3c3c; }
.g-row .d em { font-style: italic; font-size: 17.500px; font-weight: 300; letter-spacing: 1px; margin: 0 0 0 2px; }
.g-row .d b { font-weight: 400; letter-spacing: .15px; }
.g-vbar, .g-hbar { background: #f0f0f0; }
.g-vbar { width: 26px; display: flex; flex-direction: column; align-items: center; padding-top: 24px; }
.g-vbar svg, .g-hbar svg { fill: none; stroke: #666; stroke-width: 3.500; }
.g-vbar .thumb { width: 22px; height: 147px; background: #cdcdcd; margin-top: 12px; }
.g-vbar .dn { margin-top: 180px; }
.g-hbar { flex: 1; display: flex; align-items: center; padding-left: 25px; }
.g-hbar .thumb { width: 436px; height: 22px; background: #cdcdcd; margin-left: 12px; }
.g-hbar .rt { margin-left: 443px; }

.settings { flex: 1; border-left: 1px solid #b8b8b8; padding: 20px 35px 0 14px; letter-spacing: .8px; }
.s-head { display: flex; justify-content: space-between; height: 64px; padding: 0 3px 0 7px; }
.s-head h2 { margin: 0; font-weight: 300; font-size: 31px; line-height: 44px; color: #217346; word-spacing: 2px; letter-spacing: .4px; }
.s-head svg { margin: 17px 1px 0 0; }
h3 { margin: 0; font-size: 18px; line-height: 32px; color: #217346; display: flex; align-items: center; gap: 11px; }
.fold { width: 10px; height: 10px; background: linear-gradient(to bottom right, transparent 50%, #444 50%); margin-top: 2px; }
.settings label { display: block; padding-left: 21px; line-height: 28px; color: #333; }
.input { margin: 2px 0 0 21px; height: 33px; border: 2px solid #ababab; background: #fff; line-height: 30px; padding-left: 7px; letter-spacing: 1.200px; }
.settings a { display: block; margin: 9px 0 0 21px; line-height: 28px; color: #2f66a3; word-spacing: 1px; }
.h-steps { margin-top: 20px; word-spacing: 1px; }
.steps { margin: 5px 0 0 21px; height: 242px; border: 2px solid #ababab; background: #fff; }
.step { height: 30px; display: flex; align-items: center; padding: 0 11px 2px 29px; color: #333; justify-content: space-between; }
.step.on { background: #d4efe0; padding-left: 7px; justify-content: flex-start; }
.step.on span { margin: 0 auto 0 6px; }

.pq-status { flex: 1; background: #f3f1f0; border-top: 2px solid #c4c4c4; display: flex; line-height: 29px; padding: 0 6px 0 8px; font-size: 17px; color: #333; white-space: nowrap; }
.p2 { margin-left: 22px; letter-spacing: .35px; }
.p3 { margin-left: auto; letter-spacing: .35px; }
```
FILE: script.js
```js
// Worksheet row numbers
const rowNums = document.getElementById("rowNums");
for (let n = 1; n <= 17; n++) {
  const d = document.createElement("div");
  d.textContent = n < 17 ? n : "";
  if (n === 2) d.className = "cur";
  rowNums.append(d);
}

// Query preview data
const data = [
  ["고추", "전남", "계약재배", "2019-08-18"],
  ["참깨", "제주", "계약재배", "2019-09-26"],
  ["양파", "제주", "계약재배", "2018-12-02"],
  ["양파", "전남", "포전매매", "2018-02-28"],
  ["마늘", "경남", "포전매매", "2019-12-08"],
  ["감자", "전남", "포전매매", "2018-06-27"],
  ["감자", "제주", "포전매매", "2018-05-03"],
  ["마늘", "전북", "계약재배", "2018-08-18"],
  ["고추", "전북", "포전매매", "2018-03-13"],
  ["참깨", "전남", "계약재배", "2019-05-07"],
  ["양파", "전남", "포전매매", "2018-08-06"],
  ["마늘", "제주", "포전매매", "2018-01-19"],
  ["마늘", "전북", "포전매매", "2019-05-08"],
  ["양파", "제주", "계약재배", "2018-06-16"]
];
const nums = document.getElementById("gridNums");
const rows = document.getElementById("gridRows");
data.forEach((r, i) => {
  const n = document.createElement("div");
  n.textContent = i + 1;
  nums.append(n);
  const row = document.createElement("div");
  row.className = "g-row";
  r.forEach((v, c) => {
    const s = document.createElement("span");
    if (c === 3) {
      s.className = "d";
      s.innerHTML = `<b>${v}</b> <em>오전</em> 12:00:00`;
    } else {
      s.textContent = v;
    }
    row.append(s);
  });
  row.append(document.createElement("span"));
  rows.append(row);
});
```
